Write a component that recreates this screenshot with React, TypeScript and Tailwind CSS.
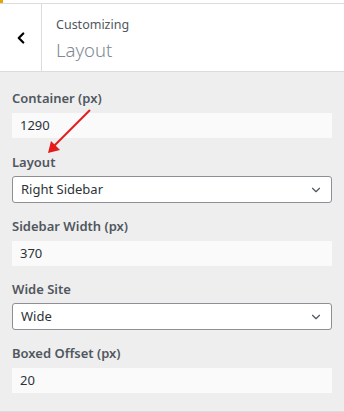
import { ChevronDown, ChevronLeft } from 'lucide-react';

const font = { fontFamily: '"Noto Sans", "Open Sans", sans-serif' };

const Label = ({ children }: { children: string }) => (
  <div className="text-[13px] leading-5 font-semibold text-[#50575e]">{children}</div>
);

const TextInput = ({ value }: { value: string }) => (
  <div className="mt-[5px] flex h-[25px] items-center bg-[#fafafb] px-2 text-[13px] text-[#2c3338]">
    {value}
  </div>
);

const SelectBox = ({ value }: { value: string }) => (
  <div className="mt-1 flex h-[27px] items-center justify-between rounded-[3px] border border-[#8c8f94] bg-white pr-2 pl-2 text-[13px] text-[#2c3338]">
    <span>{value}</span>
    <ChevronDown size={14} strokeWidth={2} className="text-[#50575e]" />
  </div>
);

export default function App() {
  return (
    <div className="flex h-[412px] w-[344px] flex-col overflow-hidden bg-[#eeeeee]" style={font}>
      <div className="relative h-[3px] bg-white">
        <div className="absolute top-0 left-0 h-[3px] w-[3px] bg-[#e0a800]" />
      </div>
      <div className="flex h-[69px] border-t border-b border-[#dcdcde] bg-white">
        <div className="flex w-[42px] items-center justify-center border-r border-[#dcdcde]">
          <ChevronLeft size={18} strokeWidth={3} className="text-black" />
        </div>
        <div className="flex flex-col pt-[13px] pl-[14px]">
          <div className="text-[12.5px] leading-4 text-[#50575e]">Customizing</div>
          <div className="mt-[5px] text-[18.5px] leading-6 font-light text-[#7e8993]">Layout</div>
        </div>
      </div>

      <div className="relative flex flex-1 flex-col px-3 pt-4">
        <Label>Container (px)</Label>
        <TextInput value="1290" />

        <div className="mt-[14px]">
          <Label>Layout</Label>
        </div>
        <SelectBox value="Right Sidebar" />

        <div className="mt-[13px]">
          <Label>Sidebar Width (px)</Label>
        </div>
        <TextInput value="370" />

        <div className="mt-[13px]">
          <Label>Wide Site</Label>
        </div>
        <SelectBox value="Wide" />

        <div className="mt-[13px]">
          <Label>Boxed Offset (px)</Label>
        </div>
        <TextInput value="20" />

        <svg className="absolute top-[34px] left-[44px]" width="50" height="50" viewBox="0 0 50 50">
          <line x1="46" y1="4" x2="8" y2="42" stroke="#e31b1b" strokeWidth="2" />
          <polygon points="4,47 7,35 16,44" fill="#e31b1b" />
        </svg>
      </div>
      <div className="h-px bg-[#dcdcde]" />
    </div>
  );
}
